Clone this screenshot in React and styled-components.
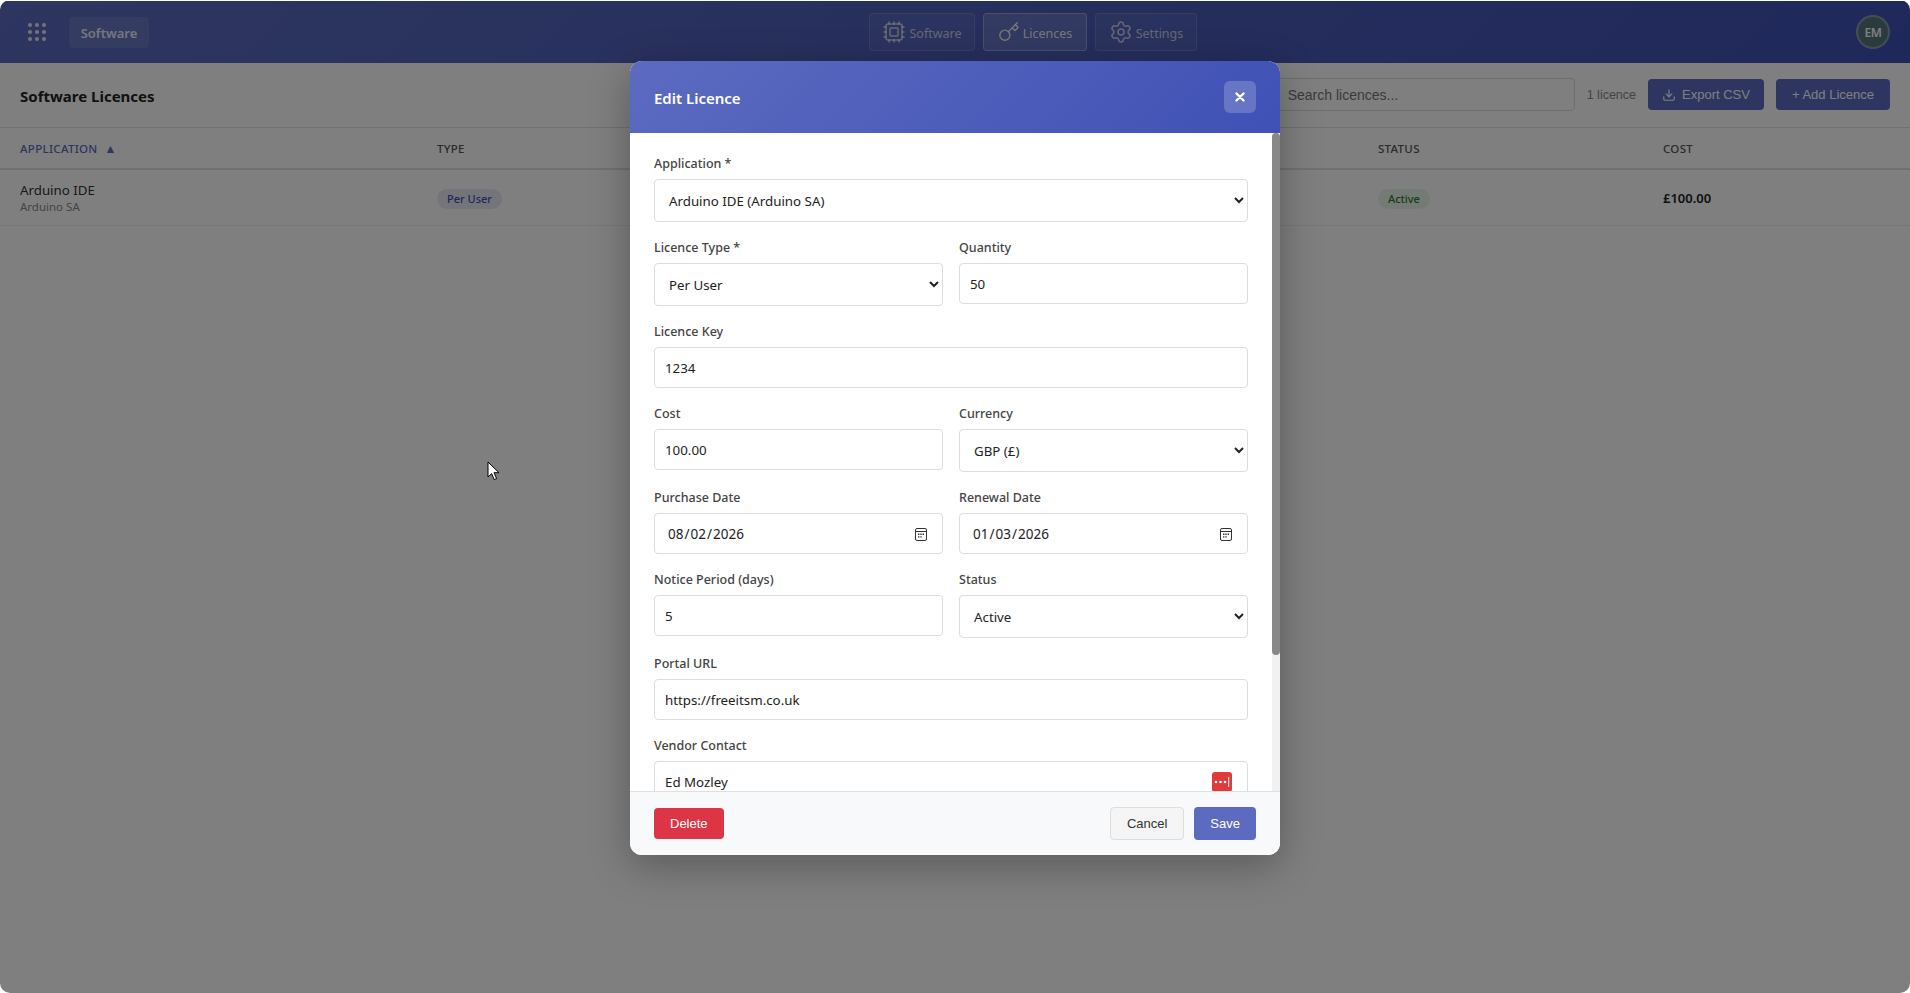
import { createGlobalStyle } from "styled-components";
import styled from "styled-components";
import { Cpu, Key, Settings, Download } from "lucide-react";

const GlobalStyle = createGlobalStyle`
  html, body { margin: 0; padding: 0; height: 100%; background: #fff; }
  body { font-family: "Noto Sans", "Open Sans", sans-serif; overflow: hidden; }
  * { box-sizing: border-box; }
`;

const Screen = styled.div`
  position: relative;
  width: 1910px;
  height: 993px;
  overflow: hidden;
  background: #fff;
  border-radius: 10px;
  padding-top: 1px;
`;
const Header = styled.header`
  height: 62px;
  display: grid;
  grid-template-columns: 841px auto 1fr;
  align-items: center;
  padding: 0 20px 0 28px;
  color: #fff;
  background: linear-gradient(135deg, #5c6bc0, #3f51b5);
`;
const Left = styled.div`
  display: flex;
  align-items: center;
  gap: 23px;
`;
const Chip = styled.div`
  width: 80px;
  height: 31px;
  padding-top: 2px;
  display: flex;
  align-items: center;
  justify-content: center;
  border-radius: 4px;
  background: rgba(255, 255, 255, 0.1);
  color: rgba(255, 255, 255, 0.9);
  font-size: 13px;
  font-weight: 600;
`;
const Nav = styled.nav`
  display: flex;
  gap: 8px;
`;
const Tab = styled.div`
  height: 38px;
  width: ${(p) => p.$w}px;
  display: flex;
  align-items: center;
  justify-content: center;
  gap: 3px;
  border-radius: 4px;
  border: 1px solid rgba(255, 255, 255, ${(p) => (p.$active ? 0.3 : 0.15)});
  background: rgba(255, 255, 255, ${(p) => (p.$active ? 0.15 : 0.05)});
  color: rgba(255, 255, 255, ${(p) => (p.$active ? 0.9 : 0.7)});
  font-size: 12.5px;
`;
const TabLabel = styled.span`
  padding-top: 2px;
`;
const Right = styled.div`
  display: flex;
  justify-content: flex-end;
`;
const Avatar = styled.div`
  width: 34px;
  height: 34px;
  border-radius: 50%;
  display: flex;
  align-items: center;
  justify-content: center;
  background: #56757a;
  border: 2px solid rgba(255, 255, 255, 0.3);
  font-size: 12px;
  font-weight: 600;
  letter-spacing: -0.5px;
`;
const Toolbar = styled.div`
  height: 65px;
  display: flex;
  align-items: center;
  gap: 12px;
  padding: 0 20px 1px;
  border-bottom: 1px solid #e0e0e0;
`;
const PageTitle = styled.h1`
  margin: 2px auto 0 0;
  font-size: 15px;
  font-weight: 700;
  color: #222;
`;
const Search = styled.input`
  width: 300px;
  height: 33px;
  padding: 0 12px;
  border: 1px solid #ddd;
  border-radius: 4px;
  font: 14px "Liberation Sans", Arial, sans-serif;
  &::placeholder { color: #757575; }
`;
const Count = styled.span`
  font: 12.5px "Liberation Sans", Arial, sans-serif;
  color: #888;
`;
const ToolButton = styled.button`
  height: 31px;
  padding: 0 ${(p) => p.$pad}px;
  display: flex;
  align-items: center;
  gap: 6px;
  border: 0;
  border-radius: 4px;
  background: #5c6bc0;
  color: #fff;
  font: 13px "Liberation Sans", Arial, sans-serif;
`;
const TableRow = styled.div`
  display: grid;
  grid-template-columns: 417px 941px 285px 1fr;
  align-items: center;
  height: ${(p) => p.$h}px;
  border-bottom: ${(p) => p.$line};
  & > div { padding-left: 20px; }
`;
const HeadCell = styled.div`
  font-size: 11.5px;
  font-weight: 500;
  letter-spacing: 0.3px;
  text-transform: uppercase;
  color: ${(p) => (p.$sorted ? "#5c6bc0" : "#555")};
`;
const SortArrow = styled.span`
  margin-left: 7px;
  font-size: 12px;
`;
const AppName = styled.div`
  font-size: 13.3px;
  color: #333;
  line-height: 18px;
`;
const Vendor = styled.div`
  font-size: 11.5px;
  color: #888;
  line-height: 16px;
`;
const Badge = styled.span`
  display: inline-flex;
  align-items: center;
  height: 20px;
  padding: 0 10px;
  border-radius: 10px;
  font-size: 11px;
  font-weight: 500;
  background: ${(p) => p.$bg};
  color: ${(p) => p.$fg};
`;
const Cost = styled.div`
  font-size: 13px;
  font-weight: 600;
  color: #222;
`;

const Overlay = styled.div`
  position: absolute;
  inset: 1px 0 0 0;
  display: flex;
  justify-content: center;
  align-items: flex-start;
  padding-top: 60px;
  background: rgba(0, 0, 0, 0.5);
`;
const Modal = styled.div`
  width: 650px;
  height: 794px;
  display: flex;
  flex-direction: column;
  border-radius: 12px;
  overflow: hidden;
  background: #fff;
  box-shadow: 0 10px 40px rgba(0, 0, 0, 0.3);
`;
const ModalHead = styled.div`
  height: 72px;
  flex: none;
  display: flex;
  align-items: center;
  justify-content: space-between;
  padding: 0 24px;
  color: #fff;
  background: linear-gradient(135deg, #5c6bc0, #3f51b5);
`;
const ModalTitle = styled.h2`
  margin: 2px 0 0;
  font-size: 15px;
  font-weight: 600;
`;
const CloseButton = styled.button`
  width: 32px;
  height: 32px;
  border: 0;
  border-radius: 6px;
  background: rgba(255, 255, 255, 0.2);
  color: #fff;
  display: flex;
  align-items: center;
  justify-content: center;
  padding: 0;
`;
const ModalBody = styled.div`
  position: relative;
  flex: 1;
  min-height: 0;
  overflow: hidden;
  padding: 21px 32px 0 24px;
`;
const ScrollTrack = styled.div`
  position: absolute;
  top: 0;
  right: 0;
  bottom: 0;
  width: 8px;
  background: #f1f1f1;
`;
const ScrollThumb = styled.div`
  height: 522px;
  border-radius: 4px;
  background: #888;
`;
const Row = styled.div`
  display: grid;
  grid-template-columns: 1fr 1fr;
  gap: 16px;
`;
const Field = styled.div`
  position: relative;
  margin-bottom: 16px;
`;
const Label = styled.label`
  display: block;
  height: 18px;
  margin-bottom: 7px;
  font-size: 12.5px;
  line-height: 20px;
  font-weight: 500;
  color: #444;
`;
const Input = styled.input`
  display: block;
  width: 100%;
  height: 41px;
  padding: 0 10px;
  border: 1px solid #ddd;
  border-radius: 4px;
  background: #fff;
  color: #222;
  font-family: inherit;
  font-size: 13.3px;
  outline: 0;
  &[type="date"] { padding-left: 12px; font-size: 13.5px; }
  &::-webkit-calendar-picker-indicator { display: none; }
`;
const Select = styled.select`
  display: block;
  width: 100%;
  height: 43px;
  padding: 0 10px;
  border: 1px solid #ddd;
  border-radius: 4px;
  background: #fff;
  color: #222;
  font-family: inherit;
  font-size: 13.3px;
`;
const CalendarMark = styled.svg`
  position: absolute;
  right: 16px;
  top: 40px;
`;
const PasswordBadge = styled.span`
  position: absolute;
  right: 16px;
  top: 36px;
  width: 20px;
  height: 20px;
  border-radius: 3px;
  background: #e03a3a;
  display: flex;
  align-items: center;
  justify-content: center;
`;
const Footer = styled.div`
  flex: none;
  height: 64px;
  display: flex;
  align-items: center;
  justify-content: space-between;
  padding: 0 24px;
  background: #f8f9fa;
  border-top: 1px solid #e0e0e0;
`;
const FooterRight = styled.div`
  display: flex;
  gap: 10px;
`;
const ActionButton = styled.button`
  height: ${(p) => p.$h || 33}px;
  padding: 0 16px;
  border: ${(p) => p.$border || "0"};
  border-radius: 4px;
  background: ${(p) => p.$bg};
  color: ${(p) => p.$fg};
  font: 13px "Liberation Sans", Arial, sans-serif;
`;
const Pointer = styled.svg`
  position: absolute;
  left: 487px;
  top: 461px;
`;

const AppsIcon = () => (
  <svg width="18" height="18" viewBox="0 0 18 18" fill="currentColor" opacity="0.85">
    {[2, 9, 16].map((y) =>
      [2, 9, 16].map((x) => <circle key={`${x}-${y}`} cx={x} cy={y} r="2" />)
    )}
  </svg>
);

const CloseIcon = () => (
  <svg width="10" height="10" viewBox="0 0 10 10" stroke="currentColor" strokeWidth="2.4" strokeLinecap="round">
    <path d="M1.5 1.5l7 7M8.5 1.5l-7 7" />
  </svg>
);

const DotsIcon = () => (
  <svg width="16" height="14" viewBox="0 0 16 14" fill="#fff">
    <circle cx="2" cy="7" r="1.3" />
    <circle cx="6.5" cy="7" r="1.3" />
    <circle cx="11" cy="7" r="1.3" />
    <rect x="14.2" y="2" width="1" height="10" />
  </svg>
);

const CalendarIcon = () => (
  <CalendarMark width="12" height="13" viewBox="0 0 12 13">
    <rect x="0.5" y="0.5" width="11" height="12" rx="1.5" fill="none" stroke="#333" />
    <path d="M1 3.5h10" stroke="#333" />
    <path d="M3 5.6h1.4V7H3zM5.3 5.6h1.4V7H5.3zM7.6 5.6H9V7H7.6zM3 8.2h1.4v1.4H3zM5.3 8.2h1.4v1.4H5.3z" fill="#333" />
  </CalendarMark>
);

export default function App() {
  return (
    <Screen>
      <GlobalStyle />
      <Header>
        <Left>
          <AppsIcon />
          <Chip>Software</Chip>
        </Left>
        <Nav>
          <Tab $w={106}><Cpu size={24} strokeWidth={1.5} /><TabLabel>Software</TabLabel></Tab>
          <Tab $w={104} $active><Key size={22} strokeWidth={1.5} /><TabLabel>Licences</TabLabel></Tab>
          <Tab $w={102}><Settings size={24} strokeWidth={1.5} /><TabLabel>Settings</TabLabel></Tab>
        </Nav>
        <Right><Avatar>EM</Avatar></Right>
      </Header>
      <Toolbar>
        <PageTitle>Software Licences</PageTitle>
        <Search placeholder="Search licences..." />
        <Count>1 licence</Count>
        <ToolButton $pad={14}><Download size={14} />Export CSV</ToolButton>
        <ToolButton $pad={16}>+ Add Licence</ToolButton>
      </Toolbar>
      <TableRow $h={42} $line="2px solid #e0e0e0">
        <HeadCell $sorted>Application<SortArrow>▲</SortArrow></HeadCell>
        <HeadCell>Type</HeadCell>
        <HeadCell>Status</HeadCell>
        <HeadCell>Cost</HeadCell>
      </TableRow>
      <TableRow $h={56} $line="1px solid #eee">
        <div>
          <AppName>Arduino IDE</AppName>
          <Vendor>Arduino SA</Vendor>
        </div>
        <div><Badge $bg="#e8eaf6" $fg="#3f51b5">Per User</Badge></div>
        <div><Badge $bg="#e8f5e9" $fg="#2e7d32">Active</Badge></div>
        <Cost>£100.00</Cost>
      </TableRow>

      <Overlay>
        <Modal>
          <ModalHead>
            <ModalTitle>Edit Licence</ModalTitle>
            <CloseButton><CloseIcon /></CloseButton>
          </ModalHead>
          <ModalBody>
            <Field>
              <Label>Application *</Label>
              <Select defaultValue="a"><option value="a">Arduino IDE (Arduino SA)</option></Select>
            </Field>
            <Row>
              <Field>
                <Label>Licence Type *</Label>
                <Select defaultValue="u"><option value="u">Per User</option></Select>
              </Field>
              <Field>
                <Label>Quantity</Label>
                <Input defaultValue="50" />
              </Field>
            </Row>
            <Field>
              <Label>Licence Key</Label>
              <Input defaultValue="1234" />
            </Field>
            <Row>
              <Field>
                <Label>Cost</Label>
                <Input defaultValue="100.00" />
              </Field>
              <Field>
                <Label>Currency</Label>
                <Select defaultValue="g"><option value="g">GBP (£)</option></Select>
              </Field>
            </Row>
            <Row>
              <Field>
                <Label>Purchase Date</Label>
                <Input type="date" defaultValue="2026-08-02" />
                <CalendarIcon />
              </Field>
              <Field>
                <Label>Renewal Date</Label>
                <Input type="date" defaultValue="2026-01-03" />
                <CalendarIcon />
              </Field>
            </Row>
            <Row>
              <Field>
                <Label>Notice Period (days)</Label>
                <Input defaultValue="5" />
              </Field>
              <Field>
                <Label>Status</Label>
                <Select defaultValue="a"><option value="a">Active</option></Select>
              </Field>
            </Row>
            <Field>
              <Label>Portal URL</Label>
              <Input defaultValue="https://freeitsm.co.uk" />
            </Field>
            <Field>
              <Label>Vendor Contact</Label>
              <Input defaultValue="Ed Mozley" />
              <PasswordBadge><DotsIcon /></PasswordBadge>
            </Field>
            <ScrollTrack><ScrollThumb /></ScrollTrack>
          </ModalBody>
          <Footer>
            <ActionButton $h={31} $bg="#dc3545" $fg="#fff">Delete</ActionButton>
            <FooterRight>
              <ActionButton $bg="#f5f5f5" $fg="#333" $border="1px solid #ddd">Cancel</ActionButton>
              <ActionButton $bg="#5c6bc0" $fg="#fff">Save</ActionButton>
            </FooterRight>
          </Footer>
        </Modal>
      </Overlay>
      <Pointer width="14" height="20" viewBox="0 0 14 20">
        <path d="M1 1v15l3.6-3.4 2.6 6 2.4-1-2.6-5.9H12z" fill="#fff" stroke="#000" strokeWidth="1" strokeLinejoin="round" />
      </Pointer>
    </Screen>
  );
}
